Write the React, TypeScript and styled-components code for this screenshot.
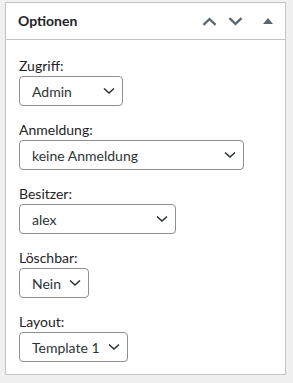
import styled, { createGlobalStyle } from 'styled-components';

const GlobalStyle = createGlobalStyle`
  html, body {
    margin: 0;
    padding: 0;
    background: #f0f0f1;
  }
  body {
    font-family: 'Segoe UI', Lato, 'Open Sans', sans-serif;
    color: #1d2327;
  }
`;

const fields = [
  { label: 'Zugriff:', value: 'Admin', width: 104 },
  { label: 'Anmeldung:', value: 'keine Anmeldung', width: 225 },
  { label: 'Besitzer:', value: 'alex', width: 157 },
  { label: 'Löschbar:', value: 'Nein', width: 70 },
  { label: 'Layout:', value: 'Template 1', width: 109 },
];

const Chevron = ({ up }: { up?: boolean }) => (
  <svg width="15" height="9" viewBox="0 0 15 9">
    <path
      d={up ? 'M1.5 7.8 L7.5 2 L13.5 7.8' : 'M1.5 1.2 L7.5 7 L13.5 1.2'}
      fill="none"
      stroke="#5b6570"
      strokeWidth="2.3"
    />
  </svg>
);

const App = () => {
  return (
    <>
      <GlobalStyle />
      <Panel>
        <Header>
          <Title>Optionen</Title>
          <Actions>
            <Chevron up />
            <Chevron />
            <Toggle>
              <svg width="10" height="6" viewBox="0 0 10 6">
                <path d="M0 6 L5 0 L10 6 Z" fill="#5b6570" />
              </svg>
            </Toggle>
          </Actions>
        </Header>
        <Body>
          {fields.map((f) => (
            <Field key={f.label}>
              <Label>{f.label}</Label>
              <Select $width={f.width}>
                <span>{f.value}</span>
                <svg width="12" height="8" viewBox="0 0 12 8">
                  <path d="M1 1.5 L6 6 L11 1.5" fill="none" stroke="#2c3338" strokeWidth="1.6" />
                </svg>
              </Select>
            </Field>
          ))}
        </Body>
      </Panel>
    </>
  );
};

const Panel = styled.div`
  margin: 2px 7px 0 5px;
  height: 373px;
  box-sizing: border-box;
  background: #fff;
  border: 1px solid #c3c4c7;
  box-shadow: 0 1px 1px rgba(0, 0, 0, 0.04);
`;

const Header = styled.div`
  display: flex;
  align-items: center;
  justify-content: space-between;
  height: 36px;
  padding: 0 12px 0 12px;
  border-bottom: 1px solid #c3c4c7;
`;

const Title = styled.h2`
  margin: 0;
  font-size: 14px;
  font-weight: 700;
  line-height: 1.4;
  color: #1d2327;
`;

const Actions = styled.div`
  display: flex;
  align-items: center;
  gap: 11px;
`;

const Toggle = styled.div`
  display: flex;
  align-items: center;
  margin-left: 9px;
`;

const Body = styled.div`
  display: flex;
  flex-direction: column;
  gap: 14px;
  padding: 16px 12px 0 13px;
`;

const Field = styled.div`
  display: flex;
  flex-direction: column;
  align-items: flex-start;
`;

const Label = styled.div`
  font-size: 14px;
  line-height: 20px;
`;

const Select = styled.div<{ $width: number }>`
  width: ${(p) => p.$width}px;
  height: 30px;
  box-sizing: border-box;
  display: flex;
  align-items: center;
  justify-content: space-between;
  padding: 0 7px 0 12px;
  border: 1px solid #8c8f94;
  border-radius: 4px;
  font-size: 14px;
  color: #2c3338;
  background: #fff;
`;

export default App;
